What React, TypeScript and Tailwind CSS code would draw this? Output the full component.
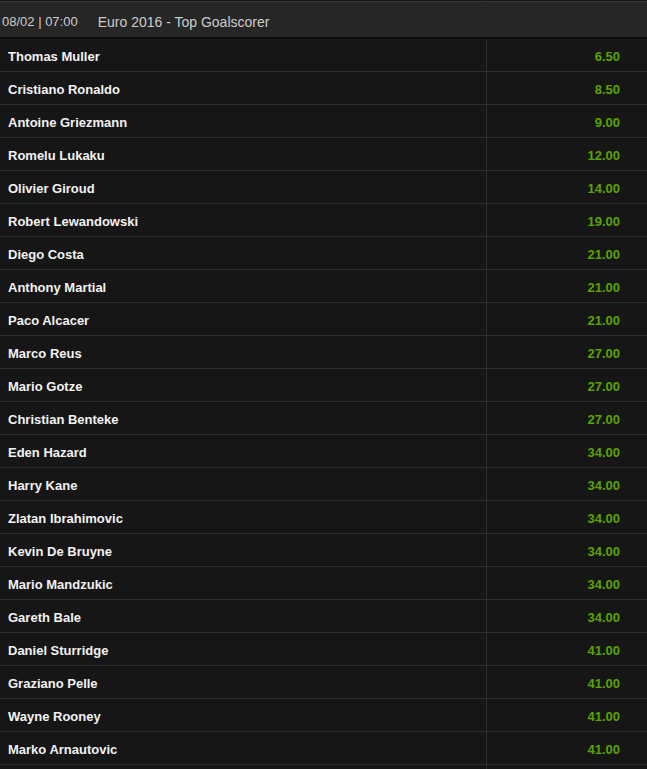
const players: [string, string][] = [
  ['Thomas Muller', '6.50'],
  ['Cristiano Ronaldo', '8.50'],
  ['Antoine Griezmann', '9.00'],
  ['Romelu Lukaku', '12.00'],
  ['Olivier Giroud', '14.00'],
  ['Robert Lewandowski', '19.00'],
  ['Diego Costa', '21.00'],
  ['Anthony Martial', '21.00'],
  ['Paco Alcacer', '21.00'],
  ['Marco Reus', '27.00'],
  ['Mario Gotze', '27.00'],
  ['Christian Benteke', '27.00'],
  ['Eden Hazard', '34.00'],
  ['Harry Kane', '34.00'],
  ['Zlatan Ibrahimovic', '34.00'],
  ['Kevin De Bruyne', '34.00'],
  ['Mario Mandzukic', '34.00'],
  ['Gareth Bale', '34.00'],
  ['Daniel Sturridge', '41.00'],
  ['Graziano Pelle', '41.00'],
  ['Wayne Rooney', '41.00'],
  ['Marko Arnautovic', '41.00'],
  ['', ''],
];

function Row({ name, odds }: { name: string; odds: string }) {
  return (
    <div className="flex h-[33px] shrink-0 border-b border-[#2e2e2e]">
      <div className="flex w-[487px] items-center border-r border-[#2e2e2e] pl-[8px] pt-[3px] text-[13px] font-bold text-[#f2f2f2]">
        {name}
      </div>
      <div className="flex flex-1 items-center justify-end pr-[27px] pt-[3px] text-[13px] font-bold text-[#5aa300]">
        {odds}
      </div>
    </div>
  );
}

export default function App() {
  return (
    <div
      className="flex h-[769px] w-[647px] flex-col overflow-hidden bg-[#161616]"
      style={{ fontFamily: '"Liberation Sans", Arial, sans-serif' }}
    >
      <div className="flex h-px shrink-0">
        <div className="w-[487px] border-r border-[#2e2e2e]" />
      </div>
      <div className="flex h-[38px] shrink-0 items-center border-t border-[#363636] border-b-2 border-b-[#0d0d0d] bg-[#262626] pl-[2px] pt-[5px] text-[#cccccc]">
        <span className="text-[13px]">08/02 | 07:00</span>
        <span className="ml-[20px] text-[14px]">Euro 2016 - Top Goalscorer</span>
      </div>
      {players.map(([name, odds], i) => (
        <Row key={i} name={name} odds={odds} />
      ))}
    </div>
  );
}
